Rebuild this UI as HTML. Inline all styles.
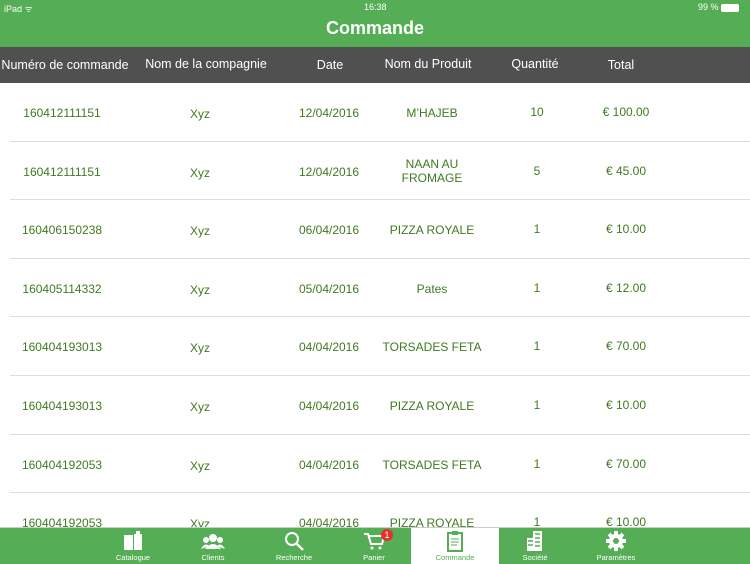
<!DOCTYPE html>
<html><head><meta charset="utf-8"><style>
body{margin:0;width:750px;height:563px;overflow:hidden;background:#fff;font-family:"Liberation Sans",sans-serif;position:relative}
.top{position:absolute;left:0;top:0;width:750px;height:47px;background:#55ad55;color:#fff}
.sb{position:absolute;top:2px;font-size:9px}
.title{position:absolute;top:18px;width:100%;text-align:center;font-size:18px;font-weight:bold}
.hd{position:absolute;top:47px;left:0;width:750px;height:36px;background:#505050;color:#fff;font-size:12.5px}
.hd span,.row span{position:absolute;transform:translateX(-50%);white-space:nowrap;text-align:center}
.row{position:absolute;left:0;width:750px;height:58.6px;color:#3f7a22;font-size:12px}
.row:after{content:"";position:absolute;left:10px;right:0;bottom:0;height:1px;background:#ddd}
.tab{position:absolute;top:527px;left:0;width:750px;height:36px;background:#55ad55;border-top:1px solid #ccc}
.t{position:absolute;top:0;width:82px;height:36px;color:#fff;font-size:7.5px;text-align:center}
.t svg{display:block;margin:2px auto 0}
.t div{position:absolute;bottom:2px;width:100%}
</style></head><body>
<div class="top">
<div class="sb" style="left:4px">iPad ᯤ</div>
<div class="sb" style="left:364px">16:38</div>
<div class="sb" style="left:698px">99 % <span style="display:inline-block;width:16px;height:6px;border:1px solid #fff;background:#fff;vertical-align:middle;border-radius:2px"></span></div>
<div class="title">Commande</div>
</div>
<div class="hd">
<span style="left:65px;top:11px">Numéro de commande</span>
<span style="left:206px;top:10px">Nom de la compagnie</span>
<span style="left:330px;top:11px">Date</span>
<span style="left:428px;top:10px">Nom du Produit</span>
<span style="left:535px;top:10px">Quantité</span>
<span style="left:621px;top:11px">Total</span>
</div>
<div class="row" style="top:83px"><span style="left:62px;top:23px">160412111151</span><span style="left:200px;top:24px">Xyz</span><span style="left:329px;top:23px">12/04/2016</span><span style="left:432px;top:23px">M’HAJEB</span><span style="left:537px;top:22px">10</span><span style="left:626px;top:22px">€ 100.00</span></div>
<div class="row" style="top:141.6px"><span style="left:62px;top:23px">160412111151</span><span style="left:200px;top:24px">Xyz</span><span style="left:329px;top:23px">12/04/2016</span><span style="left:432px;top:15px">NAAN AU<br>FROMAGE</span><span style="left:537px;top:22px">5</span><span style="left:626px;top:22px">€ 45.00</span></div>
<div class="row" style="top:200.2px"><span style="left:62px;top:23px">160406150238</span><span style="left:200px;top:24px">Xyz</span><span style="left:329px;top:23px">06/04/2016</span><span style="left:432px;top:23px">PIZZA ROYALE</span><span style="left:537px;top:22px">1</span><span style="left:626px;top:22px">€ 10.00</span></div>
<div class="row" style="top:258.8px"><span style="left:62px;top:23px">160405114332</span><span style="left:200px;top:24px">Xyz</span><span style="left:329px;top:23px">05/04/2016</span><span style="left:432px;top:23px">Pates</span><span style="left:537px;top:22px">1</span><span style="left:626px;top:22px">€ 12.00</span></div>
<div class="row" style="top:317.4px"><span style="left:62px;top:23px">160404193013</span><span style="left:200px;top:24px">Xyz</span><span style="left:329px;top:23px">04/04/2016</span><span style="left:432px;top:23px">TORSADES FETA</span><span style="left:537px;top:22px">1</span><span style="left:626px;top:22px">€ 70.00</span></div>
<div class="row" style="top:376px"><span style="left:62px;top:23px">160404193013</span><span style="left:200px;top:24px">Xyz</span><span style="left:329px;top:23px">04/04/2016</span><span style="left:432px;top:23px">PIZZA ROYALE</span><span style="left:537px;top:22px">1</span><span style="left:626px;top:22px">€ 10.00</span></div>
<div class="row" style="top:434.6px"><span style="left:62px;top:23px">160404192053</span><span style="left:200px;top:24px">Xyz</span><span style="left:329px;top:23px">04/04/2016</span><span style="left:432px;top:23px">TORSADES FETA</span><span style="left:537px;top:22px">1</span><span style="left:626px;top:22px">€ 70.00</span></div>
<div class="row" style="top:493.2px"><span style="left:62px;top:23px">160404192053</span><span style="left:200px;top:24px">Xyz</span><span style="left:329px;top:23px">04/04/2016</span><span style="left:432px;top:23px">PIZZA ROYALE</span><span style="left:537px;top:22px">1</span><span style="left:626px;top:22px">€ 10.00</span></div>
<div class="tab">
<div class="t" style="left:92px"><svg width="22" height="22"><rect x="2" y="5" width="9" height="15" fill="#fff"/><rect x="12" y="4" width="8" height="16" fill="#fff"/><rect x="14" y="1" width="4" height="4" fill="#fff"/></svg><div>Catalogue</div></div>
<div class="t" style="left:172px"><svg width="24" height="22"><circle cx="12" cy="8" r="4" fill="#fff"/><circle cx="5" cy="10" r="3" fill="#fff"/><circle cx="19" cy="10" r="3" fill="#fff"/><path d="M4 19q8-10 16 0z M0 19q4-7 8-3 M24 19q-4-7-8-3" fill="#fff"/></svg><div>Clients</div></div>
<div class="t" style="left:253px"><svg width="22" height="22"><circle cx="9" cy="9" r="6" stroke="#fff" stroke-width="2" fill="none"/><path d="M13 13l7 7" stroke="#fff" stroke-width="2.5"/></svg><div>Recherche</div></div>
<div class="t" style="left:333px"><svg width="22" height="22"><path d="M1 4h4l3 10h11l2-8H6" stroke="#fff" stroke-width="2" fill="none"/><circle cx="9" cy="18" r="1.5" fill="#fff"/><circle cx="17" cy="18" r="1.5" fill="#fff"/></svg><div>Panier</div><span style="position:absolute;left:48px;top:1px;width:12px;height:12px;border-radius:6px;background:#e53030;font-size:9px;line-height:12px">1</span></div>
<div class="t" style="left:411px;width:88px;background:#fff;color:#55ad55"><svg width="22" height="22"><rect x="4" y="3" width="14" height="18" stroke="#55ad55" stroke-width="2" fill="none"/><rect x="8" y="1" width="6" height="4" fill="#55ad55"/><path d="M7 9h8M7 12h8M7 15h6" stroke="#55ad55"/></svg><div>Commande</div></div>
<div class="t" style="left:494px"><svg width="22" height="22"><rect x="9" y="1" width="9" height="20" fill="#fff"/><rect x="3" y="8" width="7" height="13" fill="#fff"/><path d="M11 4h5M11 8h5M11 12h5M11 16h5M4 11h5M4 15h5" stroke="#55ad55" stroke-width="1.5"/></svg><div>Société</div></div>
<div class="t" style="left:575px"><svg width="22" height="22"><circle cx="11" cy="11" r="7" fill="#fff"/><path d="M11 1v20M1 11h20M4 4l14 14M18 4L4 18" stroke="#fff" stroke-width="4"/><circle cx="11" cy="11" r="3" fill="#55ad55"/></svg><div>Paramètres</div></div>
</div>
</body></html>
